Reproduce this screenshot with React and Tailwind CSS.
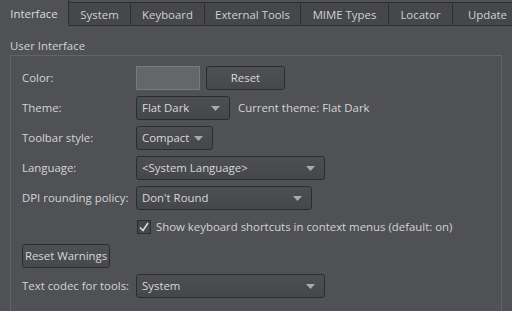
import React from 'react';

const tabs = [
  { label: 'Interface', w: 'w-[69px]', active: true },
  { label: 'System', w: 'w-[62px]' },
  { label: 'Keyboard', w: 'w-[74px]' },
  { label: 'External Tools', w: 'w-[96px]' },
  { label: 'MIME Types', w: 'w-[88px]' },
  { label: 'Locator', w: 'w-[64px]' },
  { label: 'Update', w: 'w-[70px]' },
];

function Arrow() {
  return (
    <svg width="9" height="5" viewBox="0 0 9 5" className="shrink-0">
      <path d="M0 0 H9 L4.5 5 Z" fill="#a9aaac" />
    </svg>
  );
}

function Combo({ text, w }) {
  return (
    <div className={`${w} h-[24px] flex items-center justify-between pl-[5px] pr-[9px] rounded-[3px] border border-[#2b2c2e] bg-gradient-to-b from-[#4d4e51] to-[#46474a] text-[#d8d8d8] whitespace-nowrap`}>
      <span>{text}</span>
      <Arrow />
    </div>
  );
}

function Button({ text, w }) {
  return (
    <div className={`${w} h-[24px] flex items-center justify-center rounded-[3px] border border-[#2b2c2e] bg-gradient-to-b from-[#4f5053] to-[#47484b] text-[#d8d8d8] whitespace-nowrap`}>
      {text}
    </div>
  );
}

function Row({ label, children }) {
  return (
    <div className="flex items-center h-[24px]">
      <div className="w-[114px] shrink-0 whitespace-nowrap">{label}</div>
      <div className="flex items-center gap-[8px]">{children}</div>
    </div>
  );
}

export default function App() {
  return (
    <div className="w-[512px] h-[311px] overflow-hidden bg-[#505154] text-[#d4d4d4] text-[11.4px] leading-[16px]" style={{ fontFamily: '"Open Sans", "Noto Sans", sans-serif' }}>
      <div className="flex items-end h-[26px] border-b border-[#2e2f31]">
        {tabs.map((t) =>
          t.active ? (
            <div key={t.label} className={`${t.w} shrink-0 h-[27px] -mb-px pt-[1px] flex items-center justify-center bg-[#505154] border-t border-r border-[#2e2f31] text-[#dcdcdc] relative z-10`}>
              {t.label}
            </div>
          ) : (
            <div key={t.label} className={`${t.w} shrink-0 h-[23px] pt-[1px] flex items-center justify-center bg-[#46474a] border-t border-r border-[#2e2f31] text-[#d0d0d0]`}>
              {t.label}
            </div>
          )
        )}
      </div>

      <div className="px-[10px]">
        <div className="h-[29px] pt-[12px]">User Interface</div>
        <div className="h-[300px] border border-[#636467] pl-[11px] pt-[10px] flex flex-col gap-[6px]">
          <Row label="Color:">
            <div className="w-[64px] h-[24px] bg-[#656667] border border-[#7a7b7d]" />
            <div className="ml-[-2px]"><Button text="Reset" w="w-[79px]" /></div>
          </Row>
          <Row label="Theme:">
            <Combo text="Flat Dark" w="w-[94px]" />
            <span>Current theme: Flat Dark</span>
          </Row>
          <Row label="Toolbar style:">
            <Combo text="Compact" w="w-[77px]" />
          </Row>
          <Row label="Language:">
            <Combo text="<System Language>" w="w-[189px]" />
          </Row>
          <Row label="DPI rounding policy:">
            <Combo text="Don't Round" w="w-[176px]" />
          </Row>
          <div className="flex items-center h-[22px] pl-[115px]">
            <div className="w-[14px] h-[14px] border border-[#2b2c2e] bg-[#46474a] flex items-center justify-center">
              <svg width="10" height="10" viewBox="0 0 10 10">
                <path d="M1 5.5 L4 8.5 L9 1" fill="none" stroke="#dcdcdc" strokeWidth="1.6" />
              </svg>
            </div>
            <span className="ml-[5px] whitespace-nowrap">Show keyboard shortcuts in context menus (default: on)</span>
          </div>
          <div className="flex">
            <Button text="Reset Warnings" w="w-[88px]" />
          </div>
          <Row label="Text codec for tools:">
            <Combo text="System" w="w-[189px]" />
          </Row>
        </div>
      </div>
    </div>
  );
}
